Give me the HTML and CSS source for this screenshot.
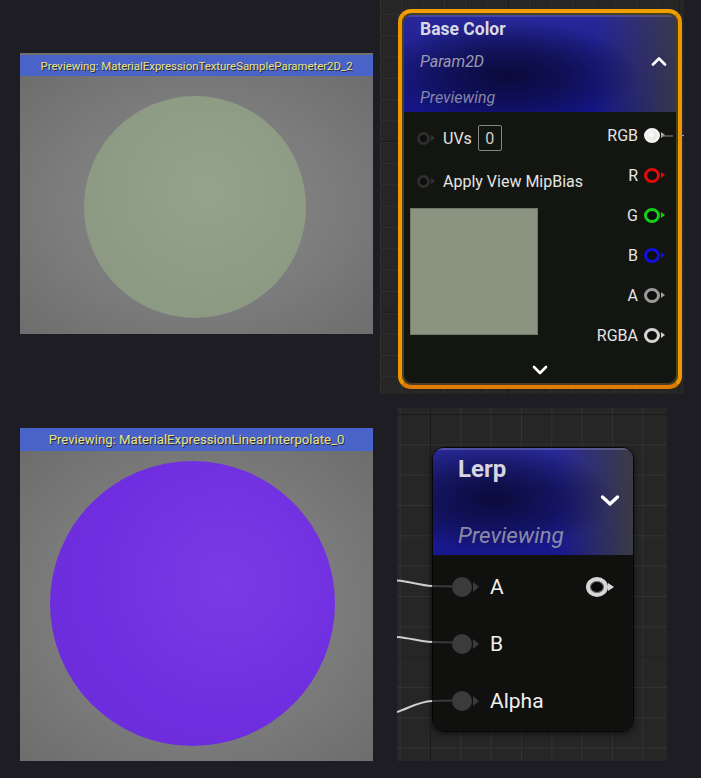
FILE: index.html
```html
<!DOCTYPE html>
<html>
<head>
<meta charset="utf-8">
<link rel="stylesheet" href="styles.css">
</head>
<body>
<div class="page">
  <div class="row row-top">
    <section class="preview preview-top">
      <div class="preview-title title-top">Previewing: MaterialExpressionTextureSampleParameter2D_2</div>
      <div class="preview-view view-top"><div class="sphere sphere-green"></div></div>
    </section>
    <section class="graph graph-top">
      <div class="selection">
        <div class="node node-base">
          <header class="base-head">
            <div class="base-title">Base Color</div>
            <div class="base-sub"><span>Param2D</span>
              <svg class="chev-up" width="16" height="10" viewBox="0 0 16 10"><polyline points="2,8.5 8,2.5 14,8.5" fill="none" stroke="#fff" stroke-width="2.6" stroke-linecap="round" stroke-linejoin="round"/></svg>
            </div>
            <div class="base-prev">Previewing</div>
          </header>
          <div class="base-body">
            <div class="pin-cols">
              <div class="pins-in">
                <div class="in-row"><span class="pin-ring-in"></span><span class="in-label">UVs</span><span class="num-box">0</span></div>
                <div class="in-row"><span class="pin-ring-in"></span><span class="in-label">Apply View MipBias</span></div>
                <div class="tex-preview"></div>
              </div>
              <div class="pins-out">
                <div class="out-row"><span class="out-label">RGB</span><span class="pin-out pin-white"></span></div>
                <div class="out-row"><span class="out-label">R</span><span class="pin-out pin-red"></span></div>
                <div class="out-row"><span class="out-label">G</span><span class="pin-out pin-green"></span></div>
                <div class="out-row"><span class="out-label">B</span><span class="pin-out pin-blue"></span></div>
                <div class="out-row"><span class="out-label">A</span><span class="pin-out pin-gray"></span></div>
                <div class="out-row"><span class="out-label">RGBA</span><span class="pin-out pin-light"></span></div>
              </div>
            </div>
            <div class="base-foot">
              <svg width="16" height="10" viewBox="0 0 16 10"><polyline points="2,2 8,8 14,2" fill="none" stroke="#fff" stroke-width="2.6" stroke-linecap="round" stroke-linejoin="round"/></svg>
            </div>
          </div>
        </div>
      </div>
      <svg class="wires" width="304" height="394" viewBox="0 0 304 394">
        <line x1="282" y1="136" x2="293" y2="136" stroke="#7a7a7a" stroke-width="1.2"/>
        <line x1="299" y1="135.5" x2="304" y2="135.5" stroke="#9a9a9a" stroke-width="1.2"/>
      </svg>
    </section>
  </div>
  <div class="row row-bottom">
    <section class="preview preview-bottom">
      <div class="preview-title title-bottom">Previewing: MaterialExpressionLinearInterpolate_0</div>
      <div class="preview-view view-bottom"><div class="sphere sphere-purple"></div></div>
    </section>
    <section class="graph graph-bottom">
      <div class="node node-lerp">
        <header class="lerp-head">
          <div class="lerp-title">Lerp</div>
          <div class="lerp-chev">
            <svg width="20" height="13" viewBox="0 0 20 13"><polyline points="2.5,3 10,10 17.5,3" fill="none" stroke="#fff" stroke-width="3.4" stroke-linecap="round" stroke-linejoin="round"/></svg>
          </div>
          <div class="lerp-prev">Previewing</div>
        </header>
        <div class="lerp-body">
          <div class="lerp-row"><span class="pin-fill"></span><span class="lerp-label">A</span><span class="pin-out-big"></span></div>
          <div class="lerp-row"><span class="pin-fill"></span><span class="lerp-label">B</span></div>
          <div class="lerp-row"><span class="pin-fill"></span><span class="lerp-label">Alpha</span></div>
        </div>
      </div>
      <svg class="wires" width="270" height="353" viewBox="0 0 270 353">
        <path d="M0 172.5 C 14 173.5, 22 177.5, 35 178" fill="none" stroke="#cfcfcf" stroke-width="2"/>
        <path d="M35 178 L 56 178.5" fill="none" stroke="#3a3a3a" stroke-width="2"/>
        <path d="M0 229 C 14 230, 22 233.5, 35 234" fill="none" stroke="#cfcfcf" stroke-width="2"/>
        <path d="M35 234 L 56 234.5" fill="none" stroke="#3a3a3a" stroke-width="2"/>
        <path d="M0 304 C 12 300, 22 293.5, 35 293" fill="none" stroke="#cfcfcf" stroke-width="2"/>
        <path d="M35 293 L 56 292.5" fill="none" stroke="#3a3a3a" stroke-width="2"/>
      </svg>
    </section>
  </div>
</div>
</body>
</html>
```

FILE: styles.css
```css
html, body {
  margin: 0;
  padding: 0;
  background: #1e1d23;
  font-family: Roboto, "Liberation Sans", sans-serif;
}
.page {
  width: 701px;
  height: 778px;
  display: flex;
  flex-direction: column;
  overflow: hidden;
}
.row {
  display: flex;
  align-items: flex-start;
}
.row-top { height: 394px; }

/* preview panels */
.preview {
  width: 353px;
  margin-left: 20px;
  display: flex;
  flex-direction: column;
}
.preview-top {
  margin-top: 53px;
  border-top: 2px solid #707070;
}
.preview-bottom { margin-top: 34px; }
.preview-title {
  background: #4a63c9;
  color: #e8e38c;
  text-align: center;
  white-space: nowrap;
  text-shadow: 1px 1px 0 #2a2a2a;
}
.title-top {
  height: 21px;
  line-height: 22px;
  font-size: 11.4px;
}
.title-bottom {
  height: 23px;
  line-height: 23px;
  font-size: 13.2px;
}
.preview-view {
  display: flex;
  align-items: center;
  justify-content: center;
  background: radial-gradient(ellipse at 50% 50%, #8a8a8a 0%, #7c7c7c 55%, #6d6d6d 100%);
}
.view-top { height: 258px; }
.view-bottom { height: 310px; }
.sphere { border-radius: 50%; }
.sphere-green {
  width: 222px;
  height: 222px;
  margin: 3px 0 0 -4px;
  background: radial-gradient(circle at 55% 42%, #95a38d 0%, #8d9b85 60%, #899780 100%);
}
.sphere-purple {
  width: 285px;
  height: 285px;
  margin: -6px 0 0 -9px;
  background: radial-gradient(circle at 62% 42%, #7a3be6 0%, #6f2fe0 55%, #6a2ad9 100%);
}

/* graph panels */
.graph {
  position: relative;
  background-color: #262626;
}
.graph-top {
  margin-left: 7px;
  width: 304px;
  height: 394px;
  background-image:
    linear-gradient(90deg, #1a1a1a 1px, transparent 1px),
    linear-gradient(#1a1a1a 1px, transparent 1px),
    linear-gradient(90deg, #303030 1px, transparent 1px),
    linear-gradient(#303030 1px, transparent 1px);
  background-size: 170.66px 170.66px, 170.66px 170.66px, 21.33px 21.33px, 21.33px 21.33px;
  background-position: 128px 0, 0 141px, 0 0, 0 13.8px;
}
.graph-bottom {
  margin-top: 14px;
  margin-left: 24px;
  width: 270px;
  height: 353px;
  background-image:
    linear-gradient(90deg, #1a1a1a 1px, transparent 1px),
    linear-gradient(#1a1a1a 1px, transparent 1px),
    linear-gradient(90deg, #333333 1px, transparent 1px),
    linear-gradient(#333333 1px, transparent 1px);
  background-size: 242.66px 242.66px, 242.66px 242.66px, 30.33px 30.33px, 30.33px 30.33px;
  background-position: 33px 0, 0 6px, 2.67px 0, 0 6px;
}
.wires {
  position: absolute;
  left: 0;
  top: 0;
  pointer-events: none;
}

/* Base Color node */
.selection {
  position: absolute;
  left: 18px;
  top: 9px;
  width: 272px;
  height: 368px;
  border: 4px solid #f2a000;
  border-bottom-color: #e07a00;
  border-left-color: #ee9600;
  border-right-color: #ee9600;
  border-radius: 13px;
  padding: 2px;
  background: #4a4020;
}
.node-base {
  height: 100%;
  border-radius: 8px;
  overflow: hidden;
  display: flex;
  flex-direction: column;
}
.base-head {
  height: 97px;
  box-sizing: border-box;
  padding: 3px 9px 0 16px;
  display: flex;
  flex-direction: column;
  background:
    radial-gradient(ellipse 130px 55px at 105px 60px, rgba(8,8,50,0.9) 0%, rgba(8,8,50,0.55) 50%, rgba(8,8,50,0) 100%),
    linear-gradient(90deg, rgba(58,58,70,0) 70%, rgba(58,58,70,0.9) 100%),
    linear-gradient(180deg, #28289a 0%, #1c1c8e 60%, #15158c 100%);
  box-shadow: inset 0 2px 0 rgba(160,160,200,0.25);
}
.base-title {
  font-size: 17.5px;
  font-weight: bold;
  line-height: 22px;
  color: #d9d9e4;
}
.base-sub {
  margin-top: 12px;
  display: flex;
  align-items: center;
  justify-content: space-between;
  font-size: 16px;
  font-style: italic;
  line-height: 20px;
  color: #9a9ab2;
}
.chev-up { margin-right: 0; margin-top: -2px; }
.base-prev {
  margin-top: 16px;
  font-size: 16px;
  font-style: italic;
  line-height: 20px;
  color: #8686a8;
}
.base-body {
  flex: 1;
  display: flex;
  flex-direction: column;
  background: rgba(16,18,15,0.94);
}
.pin-cols {
  display: flex;
  justify-content: space-between;
}
.pins-in {
  padding: 13px 0 0 13px;
  display: flex;
  flex-direction: column;
}
.in-row {
  height: 26px;
  display: flex;
  align-items: center;
  font-size: 16px;
  color: #e4e4e4;
}
.in-row + .in-row { margin-top: 17px; }
.pin-ring-in {
  position: relative;
  width: 13px;
  height: 13px;
  box-sizing: border-box;
  border-radius: 50%;
  border: 3px solid #2e2e2e;
  background: #0e0e0e;
}
.pin-ring-in::after {
  content: "";
  position: absolute;
  right: -8px;
  top: 0.5px;
  border-left: 4px solid #333;
  border-top: 3px solid transparent;
  border-bottom: 3px solid transparent;
}
.in-label { margin-left: 13px; }
.num-box {
  margin-left: 6px;
  width: 24px;
  height: 26px;
  box-sizing: border-box;
  border: 1.5px solid #858585;
  border-radius: 2px;
  display: flex;
  align-items: center;
  justify-content: center;
  color: #cfcfcf;
  font-size: 16px;
}
.tex-preview {
  margin: 14px 0 0 -7px;
  width: 128px;
  height: 127px;
  box-sizing: border-box;
  border: 1px solid #6f7769;
  background: #8a9480;
}
.pins-out {
  padding: 3px 11px 0 0;
  display: flex;
  flex-direction: column;
}
.out-row {
  height: 40px;
  display: flex;
  align-items: center;
  justify-content: flex-end;
  font-size: 16px;
  color: #e4e4e4;
}
.out-label { margin-right: 6px; }
.pin-out {
  position: relative;
  width: 16px;
  height: 15px;
  box-sizing: border-box;
  border-radius: 50%;
  border: 3px solid #999;
  background: #0e0e0e;
  margin-right: 5px;
}
.pin-out::after {
  content: "";
  position: absolute;
  right: -8px;
  top: 1px;
  border-left: 4px solid #999;
  border-top: 3.5px solid transparent;
  border-bottom: 3.5px solid transparent;
}
.pin-white { border-color: #f4f4f4; background: radial-gradient(circle at 40% 40%, #ffffff, #d8d8d8); }
.pin-white::after { border-left-color: #b0b0b0; }
.pin-red { border-color: #e00a0a; }
.pin-red::after { border-left-color: #e00a0a; }
.pin-green { border-color: #12d012; }
.pin-green::after { border-left-color: #12d012; }
.pin-blue { border-color: #1010e0; }
.pin-blue::after { border-left-color: #1010e0; }
.pin-gray { border-color: #9a9a9a; }
.pin-gray::after { border-left-color: #a0a0a0; }
.pin-light { border-color: #d4d4d4; }
.pin-light::after { border-left-color: #d0d0d0; }
.base-foot {
  flex: 1;
  display: flex;
  align-items: center;
  justify-content: center;
  padding-top: 1px;
}

/* Lerp node */
.node-lerp {
  position: absolute;
  left: 35px;
  top: 39px;
  width: 202px;
  height: 285px;
  box-sizing: border-box;
  border: 1px solid #060606;
  border-radius: 12px;
  overflow: hidden;
  display: flex;
  flex-direction: column;
  box-shadow: 0 2px 6px rgba(0,0,0,0.55);
}
.lerp-head {
  height: 107px;
  box-sizing: border-box;
  padding: 7px 13px 0 25px;
  display: flex;
  flex-direction: column;
  background:
    radial-gradient(ellipse 120px 55px at 60px 50px, rgba(8,8,50,0.9) 0%, rgba(8,8,50,0.5) 55%, rgba(8,8,50,0) 100%),
    linear-gradient(90deg, rgba(60,60,64,0) 62%, rgba(60,60,64,0.95) 100%),
    linear-gradient(180deg, #2a2a9a 0%, #1d1d8e 60%, #17178e 100%);
  box-shadow: inset 0 2px 0 rgba(170,170,210,0.3);
}
.lerp-title {
  font-size: 24px;
  font-weight: bold;
  line-height: 28px;
  color: #d6d6e2;
}
.lerp-chev {
  margin-top: 5px;
  height: 24px;
  display: flex;
  align-items: center;
  justify-content: flex-end;
}
.lerp-prev {
  margin-top: 10px;
  font-size: 22.5px;
  font-style: italic;
  line-height: 26px;
  color: #8a8aa6;
}
.lerp-body {
  flex: 1;
  padding-top: 3px;
  background: rgba(15,16,14,0.94);
}
.lerp-row {
  height: 57px;
  display: flex;
  align-items: center;
  padding-left: 19px;
}
.pin-fill {
  position: relative;
  width: 20px;
  height: 20px;
  border-radius: 50%;
  background: #3b3b3b;
}
.pin-fill::after {
  content: "";
  position: absolute;
  right: -7px;
  top: 5px;
  border-left: 6px solid #3b3b3b;
  border-top: 5px solid transparent;
  border-bottom: 5px solid transparent;
}
.lerp-label {
  margin-left: 18px;
  font-size: 21px;
  color: #f0f0f0;
}
.pin-out-big {
  position: relative;
  margin-left: auto;
  margin-right: 25px;
  width: 22px;
  height: 20px;
  box-sizing: border-box;
  border-radius: 50%;
  border: 4px solid #d6d6d6;
  background: #080808;
  box-shadow: inset 0 0 0 1px #777;
}
.pin-out-big::after {
  content: "";
  position: absolute;
  right: -10px;
  top: 2px;
  border-left: 6px solid #d8d8d8;
  border-top: 4.5px solid transparent;
  border-bottom: 4.5px solid transparent;
}
```
